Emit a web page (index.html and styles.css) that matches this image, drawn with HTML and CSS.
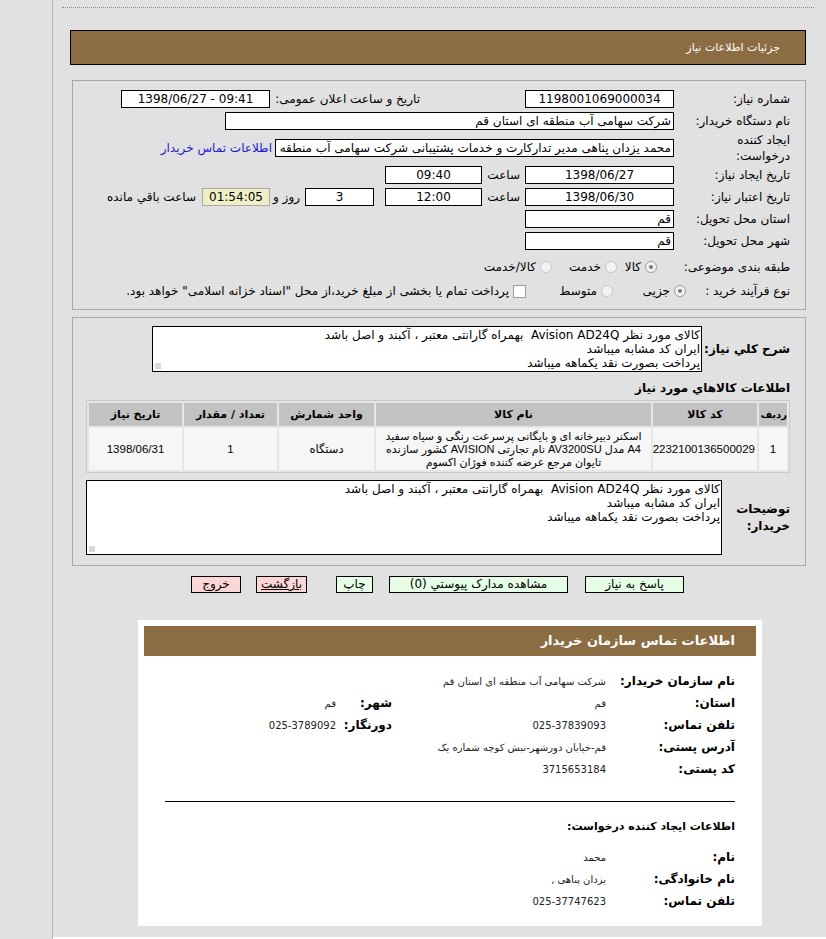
FILE: index.html
```html
<!DOCTYPE html>
<html lang="fa" dir="rtl">
<head>
<meta charset="utf-8">
<title>جزئیات اطلاعات نیاز</title>
<link rel="stylesheet" href="styles.css">
</head>
<body>
<div class="page">
  <div class="topline"></div>
  <div class="titlebar"><span>جزئیات اطلاعات نیاز</span></div>

  <div class="panel p1">
    <div class="row">
      <div class="lbl">شماره نیاز:</div>
      <div class="inp w149 c">1198001069000034</div>
      <div class="lbl2">تاریخ و ساعت اعلان عمومی:</div>
      <div class="inp w149 c ltr">1398/06/27 - 09:41</div>
    </div>
    <div class="row">
      <div class="lbl">نام دستگاه خریدار:</div>
      <div class="inp w449">شرکت سهامی آب منطقه ای استان قم</div>
    </div>
    <div class="row tall">
      <div class="lbl">ایجاد کننده<br>درخواست:</div>
      <div class="inp w399">محمد یزدان پناهی مدیر تدارکارت و خدمات پشتیبانی شرکت سهامی آب منطقه</div>
      <a class="link" href="#">اطلاعات تماس خریدار</a>
    </div>
    <div class="row">
      <div class="lbl">تاریخ ایجاد نیاز:</div>
      <div class="inp w149 c">1398/06/27</div>
      <div class="sa">ساعت</div>
      <div class="inp w97 c">09:40</div>
    </div>
    <div class="row">
      <div class="lbl">تاریخ اعتبار نیاز:</div>
      <div class="inp w149 c">1398/06/30</div>
      <div class="sa">ساعت</div>
      <div class="inp w97 c">12:00</div>
      <div class="inp w69 c days">3</div>
      <div class="rz">روز و</div>
      <div class="remain">01:54:05</div>
      <div class="rem-lbl">ساعت باقي مانده</div>
    </div>
    <div class="row">
      <div class="lbl">استان محل تحویل:</div>
      <div class="inp w149">قم</div>
    </div>
    <div class="row">
      <div class="lbl">شهر محل تحویل:</div>
      <div class="inp w149">قم</div>
    </div>
    <div class="row r8">
      <div class="lbl">طبقه بندی موضوعی:</div>
      <div class="opts o8">
        <div class="opt ow40"><span class="radio on"></span><span class="otxt">کالا</span></div>
        <div class="opt ow65"><span class="radio"></span><span class="otxt">خدمت</span></div>
        <div class="opt"><span class="radio"></span><span class="otxt">کالا/خدمت</span></div>
      </div>
    </div>
    <div class="row r9">
      <div class="lbl short">نوع فرآیند خرید :</div>
      <div class="opts">
        <div class="opt ow73"><span class="radio on"></span><span class="otxt">جزیی</span></div>
        <div class="opt ow87"><span class="radio"></span><span class="otxt">متوسط</span></div>
        <div class="opt"><span class="check"></span><span class="otxt">پرداخت تمام یا بخشی از مبلغ خرید،از محل "اسناد خزانه اسلامی" خواهد بود.</span></div>
      </div>
    </div>
  </div>

  <div class="panel p2">
    <div class="desc-row">
      <div class="blbl w88">شرح کلي نياز:</div>
      <div class="ta ta1">کالای مورد نظر Avision AD24Q&nbsp; بهمراه گارانتی معتبر ، آکبند و اصل باشد<br>ایران کد مشابه میباشد<br>پرداخت بصورت نقد یکماهه میباشد</div>
    </div>
    <div class="sec-title">اطلاعات کالاهاي مورد نياز</div>
    <table class="grid">
      <colgroup>
        <col class="cw1"><col class="cw2"><col class="cw3"><col class="cw4"><col class="cw5"><col class="cw6">
      </colgroup>
      <thead>
        <tr>
          <th class="thr">ردیف</th>
          <th>کد کالا</th>
          <th>نام کالا</th>
          <th>واحد شمارش</th>
          <th>تعداد / مقدار</th>
          <th>تاریخ نیاز</th>
        </tr>
      </thead>
      <tbody>
        <tr>
          <td>1</td>
          <td>2232100136500029</td>
          <td class="name">اسکنر دبیرخانه ای و بایگانی پرسرعت رنگی و سیاه سفید<br>A4 مدل AV3200SU نام تجارتی AVISION کشور سازنده<br>تایوان مرجع عرضه کننده فوژان اکسوم</td>
          <td>دستگاه</td>
          <td>1</td>
          <td>1398/06/31</td>
        </tr>
      </tbody>
    </table>
    <div class="desc-row r2">
      <div class="blbl w68">توضیحات<br>خریدار:</div>
      <div class="ta ta2">کالای مورد نظر Avision AD24Q&nbsp; بهمراه گارانتی معتبر ، آکبند و اصل باشد<br>ایران کد مشابه میباشد<br>پرداخت بصورت نقد یکماهه میباشد</div>
    </div>
  </div>

  <div class="btns">
    <div class="btn green b1">پاسخ به نیاز</div>
    <div class="btn green b2">مشاهده مدارک پیوستي (0)</div>
    <div class="btn green b3">چاپ</div>
    <div class="btn pink b4"><u>بازگشت</u></div>
    <div class="btn pink b5">خروج</div>
  </div>

  <div class="contact">
    <div class="ctitle">اطلاعات تماس سازمان خریدار</div>
    <table class="info">
      <tr><th class="ic1">نام سازمان خریدار:</th><td colspan="3">شرکت سهامی آب منطقه ای استان قم</td></tr>
      <tr><th>استان:</th><td class="ic2">قم</td><th class="ic3">شهر:</th><td>قم</td></tr>
      <tr><th>تلفن تماس:</th><td>025-37839093</td><th>دورنگار:</th><td>025-3789092</td></tr>
      <tr><th>آدرس پستی:</th><td colspan="3">قم-خیابان دورشهر-نبش کوچه شماره یک</td></tr>
      <tr><th>کد پستی:</th><td colspan="3">3715653184</td></tr>
    </table>
    <div class="hr"></div>
    <div class="ctitle2">اطلاعات ایجاد کننده درخواست:</div>
    <table class="info info2">
      <tr><th class="ic1">نام:</th><td>محمد</td></tr>
      <tr><th>نام خانوادگی:</th><td>یزدان پناهی ,</td></tr>
      <tr><th>تلفن تماس:</th><td>025-37747623</td></tr>
    </table>
  </div>
  <div class="footer"></div>
</div>
</body>
</html>
```

FILE: styles.css
```css
* { box-sizing: border-box; }
html, body { margin: 0; padding: 0; }
body {
  background: #e1e1e1;
  font-family: "DejaVu Sans", sans-serif;
  font-size: 12px;
  color: #000;
  direction: rtl;
}
.page {
  margin-left: 52px;
  border-left: 1px solid #b4b4b4;
  min-height: 939px;
  padding-top: 7px;
  overflow: hidden;
}
.topline {
  border-top: 1px dotted #8a8a8a;
  margin: 0 12px 0 9px;
}
.titlebar {
  margin: 22px 20px 0 17px;
  height: 35px;
  background: #8c6d43;
  border: 1px solid #000;
  color: #fff;
  font-size: 11px;
  padding-right: 25px;
  display: flex;
  align-items: center;
}
.panel {
  margin: 15px 20px 0 19px;
  border: 1px solid #a8a8a8;
}
.p1 {
  height: 230px;
  padding: 7px 15px 0 8px;
}
.row {
  display: flex;
  align-items: center;
  height: 22px;
}
.row.tall { height: 32px; }
.row.r8 { height: 30px; }
.row.r9 { height: 18px; }
.lbl {
  width: 110px;
  margin-left: 6px;
  white-space: nowrap;
  line-height: 16px;
  flex: none;
}
.lbl.short { width: 104px; margin-left: 0; }
.inp {
  height: 18px;
  border: 1px solid #000;
  background: #fff;
  line-height: 16px;
  padding: 0 2px;
  white-space: nowrap;
  overflow: hidden;
  font-size: 12px;
  flex: none;
}
.c { text-align: center; }
.ltr { direction: ltr; }
.w149 { width: 149px; }
.w449 { width: 449px; }
.w399 { width: 399px; }
.w97 { width: 97px; }
.w69 { width: 69px; }
.lbl2 {
  width: 150px;
  margin-right: 105px;
  white-space: nowrap;
  flex: none;
}
.link {
  color: #1a1acc;
  text-decoration: none;
  margin-right: 3px;
  white-space: nowrap;
}
.sa { width: 38px; margin-right: 5px; white-space: nowrap; }
.days { margin-right: 11px; }
.rz { width: 30px; margin-right: 5px; white-space: nowrap; }
.remain {
  width: 68px;
  height: 18px;
  background: #efefc6;
  border: 1px solid #a9a9a9;
  text-align: center;
  line-height: 16px;
  font-size: 12px;
  flex: none;
}
.rem-lbl { margin-right: 6px; white-space: nowrap; }
.opts { display: flex; align-items: center; }
.o8 { margin-right: 17px; }
.opt { display: flex; align-items: center; flex: none; }
.ow40 { width: 40px; }
.ow65 { width: 65px; }
.ow73 { width: 73px; }
.ow87 { width: 87px; }
.otxt { margin-right: 4px; white-space: nowrap; }
.radio {
  width: 12px;
  height: 12px;
  border-radius: 50%;
  border: 1px solid #c6c6c6;
  background: #f3f3f3;
  position: relative;
  flex: none;
}
.radio.on { border-color: #9a9a9a; }
.radio.on::after {
  content: "";
  position: absolute;
  left: 3px;
  top: 3px;
  width: 4px;
  height: 4px;
  border-radius: 50%;
  background: #7d7d7d;
}
.check {
  width: 13px;
  height: 13px;
  border: 1px solid #9b9b9b;
  background: #fff;
  flex: none;
}

.p2 {
  margin-top: 7px;
  height: 249px;
  padding: 8px 15px 0 13px;
}
.desc-row { display: flex; align-items: center; }
.blbl {
  font-weight: bold;
  font-size: 12px;
  line-height: 17px;
  flex: none;
}
.w88 { width: 88px; }
.w68 { width: 68px; }
.ta {
  background: #fff;
  border: 1px solid #000;
  font-size: 12px;
  line-height: 14px;
  padding: 1px 1px;
  position: relative;
  white-space: nowrap;
  overflow: hidden;
}
.ta::after {
  content: "";
  position: absolute;
  left: 2px;
  bottom: 2px;
  width: 6px;
  height: 6px;
  background: radial-gradient(circle, #c4c4c4 0.6px, transparent 0.9px) 0 0 / 2px 2px;
}
.ta1 { width: 550px; height: 46px; }
.ta2 { width: 636px; height: 75px; }
.sec-title {
  font-weight: bold;
  font-size: 12px;
  margin-top: 8px;
  height: 20px;
  line-height: 16px;
}
.grid {
  width: 704px;
  table-layout: fixed;
  border: 1px solid #cacaca;
  border-spacing: 2px;
  background: #e6e6e6;
  font-size: 11px;
}
.grid th {
  background: #c2c2c2;
  height: 23px;
  font-weight: bold;
  font-size: 11px;
  padding: 0;
  white-space: nowrap;
  overflow: hidden;
}
.grid th.thr { font-size: 10px; text-align: right; }
.grid td {
  background: #f6f6f6;
  height: 42px;
  text-align: center;
  padding: 0 2px;
  font-family: "Liberation Sans", "DejaVu Sans", sans-serif;
  font-size: 11.5px;
  line-height: 13px;
}
.grid td.name { padding: 0; font-size: 11px; white-space: nowrap; }
.cw1 { width: 28px; }
.cw2 { width: 104px; }
.cw3 { width: 275px; }
.cw4 { width: 95px; }
.cw5 { width: 93px; }
.cw6 { width: 93px; }
.desc-row.r2 { margin-top: 7px; }

.btns {
  display: flex;
  padding-right: 142px;
  margin-top: 10px;
  height: 17px;
}
.btn {
  border: 1px solid #000;
  height: 17px;
  font-size: 12px;
  line-height: 15px;
  text-align: center;
  white-space: nowrap;
  flex: none;
}
.green { background: #e6fde6; }
.pink { background: #fdd6d6; }
.b1 { width: 99px; }
.b2 { width: 179px; margin-right: 17px; }
.b3 { width: 37px; margin-right: 16px; }
.b4 { width: 51px; margin-right: 29px; }
.b5 { width: 50px; margin-right: 15px; }

.contact {
  margin: 27px 64px 0 85px;
  background: #fff;
  padding: 6px 6px 14px;
}
.ctitle {
  background: #8c6d43;
  color: #fff;
  font-weight: bold;
  font-size: 13px;
  height: 30px;
  line-height: 30px;
  padding-right: 21px;
}
.info {
  margin: 14px 21px 0 0;
  border-collapse: collapse;
}
.info th, .info td {
  height: 22px;
  padding: 0;
  text-align: right;
  white-space: nowrap;
}
.info th { font-weight: bold; font-size: 12px; }
.info td { font-size: 10px; color: #222; }
.ic1 { width: 129px; }
.ic2 { width: 214px; }
.ic3 { width: 56px; }
.hr {
  border-top: 1px solid #000;
  margin: 21px 21px 0 21px;
}
.ctitle2 {
  font-weight: bold;
  font-size: 11px;
  margin: 18px 21px 0 0;
  height: 14px;
  line-height: 14px;
}
.info2 { margin-top: 12px; }
.footer {
  background: #fff;
  height: 30px;
  margin-top: 11px;
}
```
